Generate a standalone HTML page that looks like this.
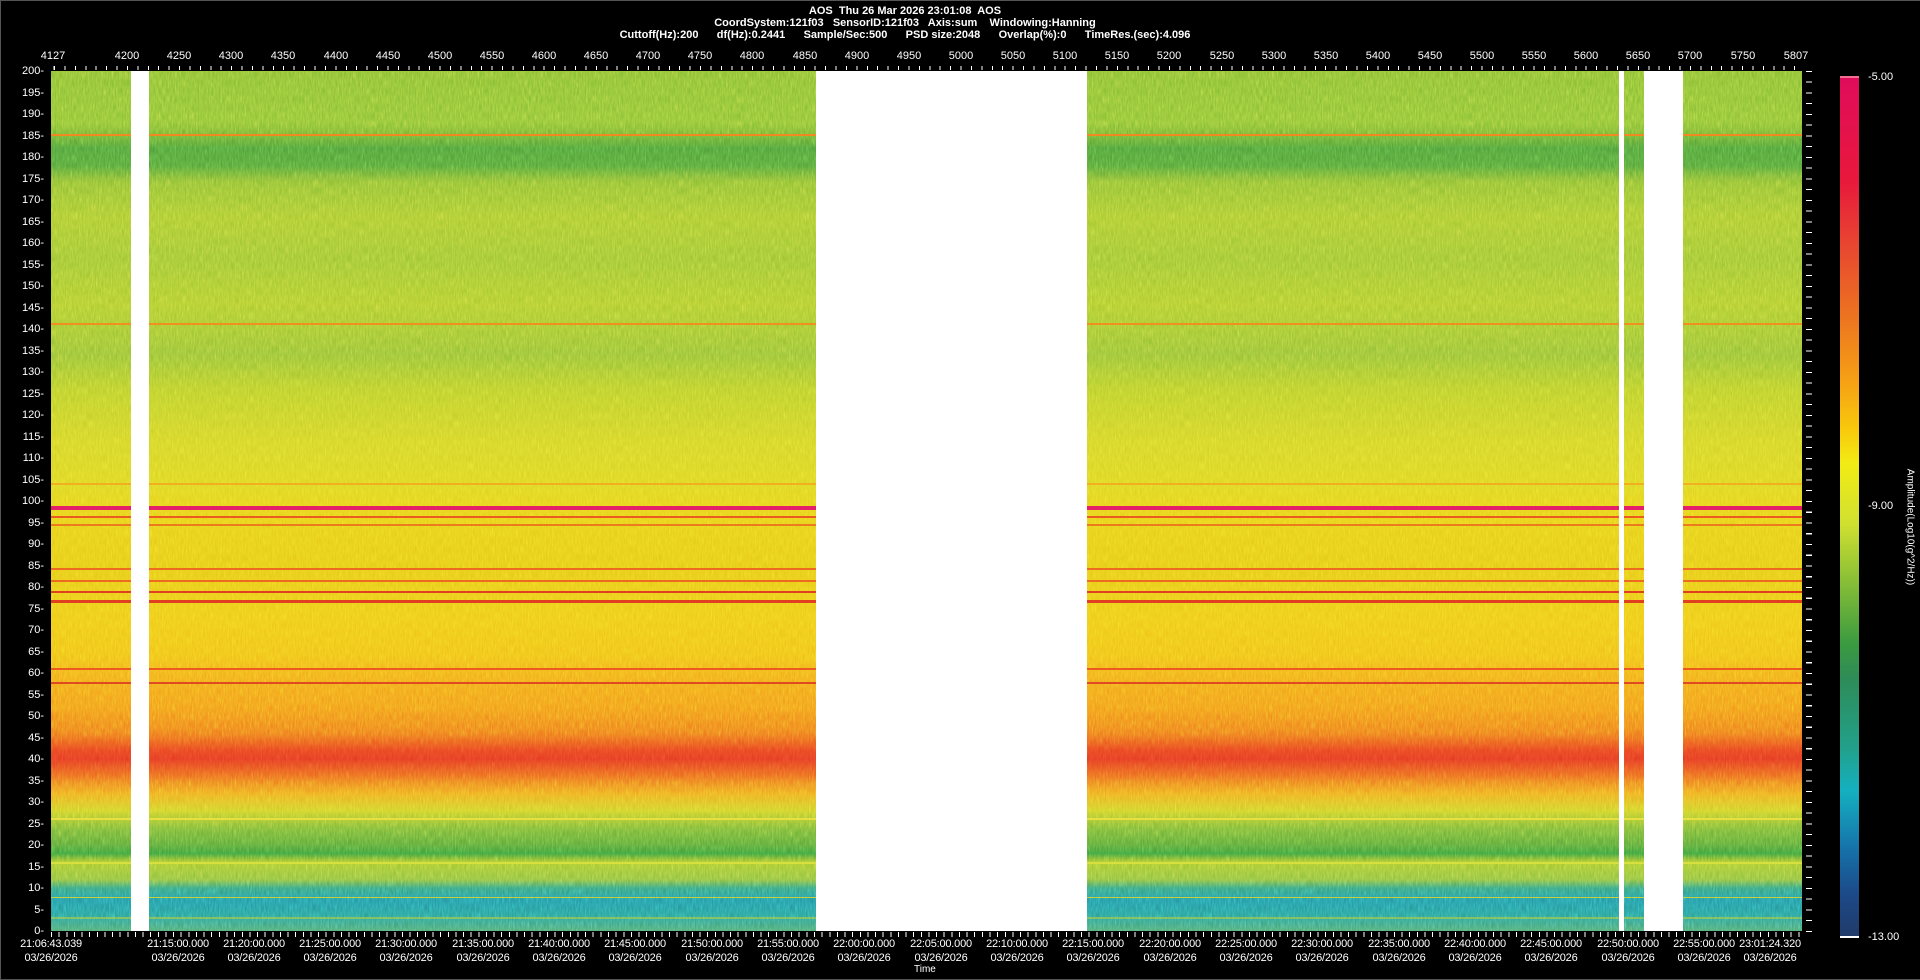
<!DOCTYPE html>
<html><head><meta charset="utf-8"><style>
*{margin:0;padding:0;box-sizing:border-box}
body{width:1920px;height:980px;background:#000;position:relative;overflow:hidden;font-family:"Liberation Sans",sans-serif;color:#fff}
.frame{position:absolute;left:0;top:0;width:1920px;height:980px;border:1px solid #555;border-right:none}
.t{position:absolute;font-size:11px;font-weight:bold;white-space:pre;left:0;width:1810px;text-align:center}
.xl{position:absolute;top:50px;font-size:11px;transform:translateX(-50%)}
.yl{position:absolute;left:0;width:44px;text-align:right;font-size:11px;transform:translateY(-50%)}
.tl{position:absolute;top:937px;font-size:11px;text-align:center;transform:translateX(-50%);line-height:14px;white-space:nowrap;letter-spacing:-0.2px}
#plot{position:absolute;left:51px;top:71px;width:1751px;height:860px;overflow:hidden;
background:linear-gradient(to bottom,
#86bd34 0%,#8cc236 6%,#7ab634 7%,#4f9e3a 9%,#55a23a 11%,#8ebf34 13%,#a8c832 17%,#9cc434 22%,#aecb30 27%,#94c036 33%,#b8cd2c 37%,#d2d228 43%,#dcd424 48%,#e6d01c 51%,#e6c81a 58%,#eec81a 64%,#f0c01a 68%,#f2a61c 71%,#f29a1c 74%,#ee7a1e 77%,#e84420 79%,#e43a22 80%,#ec6a20 82%,#eeaa22 84%,#cfd02a 86%,#7cb838 88%,#5ca63a 90%,#3e9c3c 91%,#a8c830 92%,#8cc040 94%,#3aa27a 95%,#2696a2 96.5%,#2a9c98 98%,#50a870 100%)}
.line{position:absolute;left:0;width:100%}
.gap{position:absolute;top:0;height:100%;background:#fff}
#cbar{position:absolute;left:1840px;top:76px;width:19px;height:861px;background:linear-gradient(to bottom,#e00c5c 0%,#e8183c 12%,#e84830 20%,#ec7420 28%,#f6a414 36%,#f8c80c 41%,#f2ec14 45%,#d0e030 52%,#7ab838 60%,#3a9a40 66%,#2e8c58 70%,#22a08a 78%,#14b0c0 83%,#1670a8 90%,#1c4a88 95%,#203a6a 100%)}
</style></head><body>
<div class="frame"></div>
<div class="t" style="top:5px">AOS  Thu 26 Mar 2026 23:01:08  AOS</div>
<div class="t" style="top:17px">CoordSystem:121f03   SensorID:121f03   Axis:sum    Windowing:Hanning</div>
<div class="t" style="top:29px">Cuttoff(Hz):200      df(Hz):0.2441      Sample/Sec:500      PSD size:2048      Overlap(%):0      TimeRes.(sec):4.096</div>

<div class="xl" style="left:53px">4127</div>
<div class="xl" style="left:127px">4200</div><div class="xl" style="left:179px">4250</div><div class="xl" style="left:231px">4300</div><div class="xl" style="left:283px">4350</div><div class="xl" style="left:336px">4400</div><div class="xl" style="left:388px">4450</div><div class="xl" style="left:440px">4500</div><div class="xl" style="left:492px">4550</div><div class="xl" style="left:544px">4600</div><div class="xl" style="left:596px">4650</div><div class="xl" style="left:648px">4700</div><div class="xl" style="left:700px">4750</div><div class="xl" style="left:752px">4800</div><div class="xl" style="left:805px">4850</div><div class="xl" style="left:857px">4900</div><div class="xl" style="left:909px">4950</div><div class="xl" style="left:961px">5000</div><div class="xl" style="left:1013px">5050</div><div class="xl" style="left:1065px">5100</div><div class="xl" style="left:1117px">5150</div><div class="xl" style="left:1169px">5200</div><div class="xl" style="left:1222px">5250</div><div class="xl" style="left:1274px">5300</div><div class="xl" style="left:1326px">5350</div><div class="xl" style="left:1378px">5400</div><div class="xl" style="left:1430px">5450</div><div class="xl" style="left:1482px">5500</div><div class="xl" style="left:1534px">5550</div><div class="xl" style="left:1586px">5600</div><div class="xl" style="left:1638px">5650</div><div class="xl" style="left:1690px">5700</div><div class="xl" style="left:1743px">5750</div><div class="xl" style="left:1796px">5807</div>
<div style="position:absolute;left:51px;top:66px;width:1751px;height:4px;background:repeating-linear-gradient(to right,#fff 0,#fff 1px,transparent 1px,transparent 10.42px);background-position:3px 0"></div>

<div class="yl" style="top:71px">200-</div><div class="yl" style="top:92.5px">195-</div><div class="yl" style="top:114px">190-</div><div class="yl" style="top:135.5px">185-</div><div class="yl" style="top:157px">180-</div><div class="yl" style="top:178.5px">175-</div><div class="yl" style="top:200px">170-</div><div class="yl" style="top:221.5px">165-</div><div class="yl" style="top:243px">160-</div><div class="yl" style="top:264.5px">155-</div><div class="yl" style="top:286px">150-</div><div class="yl" style="top:307.5px">145-</div><div class="yl" style="top:329px">140-</div><div class="yl" style="top:350.5px">135-</div><div class="yl" style="top:372px">130-</div><div class="yl" style="top:393.5px">125-</div><div class="yl" style="top:415px">120-</div><div class="yl" style="top:436.5px">115-</div><div class="yl" style="top:458px">110-</div><div class="yl" style="top:479.5px">105-</div><div class="yl" style="top:501px">100-</div><div class="yl" style="top:522.5px">95-</div><div class="yl" style="top:544px">90-</div><div class="yl" style="top:565.5px">85-</div><div class="yl" style="top:587px">80-</div><div class="yl" style="top:608.5px">75-</div><div class="yl" style="top:630px">70-</div><div class="yl" style="top:651.5px">65-</div><div class="yl" style="top:673px">60-</div><div class="yl" style="top:694.5px">55-</div><div class="yl" style="top:716px">50-</div><div class="yl" style="top:737.5px">45-</div><div class="yl" style="top:759px">40-</div><div class="yl" style="top:780.5px">35-</div><div class="yl" style="top:802px">30-</div><div class="yl" style="top:823.5px">25-</div><div class="yl" style="top:845px">20-</div><div class="yl" style="top:866.5px">15-</div><div class="yl" style="top:888px">10-</div><div class="yl" style="top:909.5px">5-</div><div class="yl" style="top:931px">0-</div>
<div style="position:absolute;left:1806px;top:71px;width:6px;height:862px;background:repeating-linear-gradient(to bottom,#fff 0,#fff 1px,transparent 1px,transparent 10.75px)"></div>
<div style="position:absolute;left:51px;top:932px;width:1751px;height:5px;background:repeating-linear-gradient(to right,#fff 0,#fff 1px,transparent 1px,transparent 7.63px)"></div>

<div id="plot">
<svg width="1751" height="860" style="position:absolute;left:0;top:0;mix-blend-mode:overlay;opacity:.8">
<filter id="n"><feTurbulence type="fractalNoise" baseFrequency="0.7 0.12" numOctaves="2" seed="3"/><feColorMatrix type="saturate" values="0"/></filter>
<rect width="1751" height="860" filter="url(#n)"/></svg>
<div class="line" style="top:63px;height:2px;background:#f08a20"></div>
<div class="line" style="top:252px;height:2px;background:#f0901e"></div>
<div class="line" style="top:412px;height:2px;background:#f0b020"></div>
<div class="line" style="top:435px;height:4px;background:#e4206a"></div>
<div class="line" style="top:445px;height:2px;background:#ec5a20"></div>
<div class="line" style="top:453px;height:2px;background:#ee7a1e"></div>
<div class="line" style="top:497px;height:2px;background:#ee6a20"></div>
<div class="line" style="top:509px;height:2px;background:#ee6a20"></div>
<div class="line" style="top:520px;height:2px;background:#e04020"></div>
<div class="line" style="top:529px;height:3px;background:#e04020"></div>
<div class="line" style="top:597px;height:2px;background:#ec5a20"></div>
<div class="line" style="top:611px;height:2px;background:#e04a20"></div>
<div class="line" style="top:747px;height:2px;background:#e8e040"></div>
<div class="line" style="top:791px;height:2px;background:#d8e040"></div>
<div class="line" style="top:826px;height:1px;background:#c8d040"></div>
<div class="line" style="top:846px;height:2px;background:#b8d040;opacity:.6"></div>
<div class="gap" style="left:80px;width:18px"></div>
<div class="gap" style="left:765px;width:271px"></div>
<div class="gap" style="left:1568px;width:5px"></div>
<div class="gap" style="left:1593px;width:39px"></div>
</div>

<div class="tl" style="left:51px">21:06:43.039<br>03/26/2026</div>
<div class="tl" style="left:178px">21:15:00.000<br>03/26/2026</div><div class="tl" style="left:254px">21:20:00.000<br>03/26/2026</div><div class="tl" style="left:330px">21:25:00.000<br>03/26/2026</div><div class="tl" style="left:406px">21:30:00.000<br>03/26/2026</div><div class="tl" style="left:483px">21:35:00.000<br>03/26/2026</div><div class="tl" style="left:559px">21:40:00.000<br>03/26/2026</div><div class="tl" style="left:635px">21:45:00.000<br>03/26/2026</div><div class="tl" style="left:712px">21:50:00.000<br>03/26/2026</div><div class="tl" style="left:788px">21:55:00.000<br>03/26/2026</div><div class="tl" style="left:864px">22:00:00.000<br>03/26/2026</div><div class="tl" style="left:941px">22:05:00.000<br>03/26/2026</div><div class="tl" style="left:1017px">22:10:00.000<br>03/26/2026</div><div class="tl" style="left:1093px">22:15:00.000<br>03/26/2026</div><div class="tl" style="left:1170px">22:20:00.000<br>03/26/2026</div><div class="tl" style="left:1246px">22:25:00.000<br>03/26/2026</div><div class="tl" style="left:1322px">22:30:00.000<br>03/26/2026</div><div class="tl" style="left:1399px">22:35:00.000<br>03/26/2026</div><div class="tl" style="left:1475px">22:40:00.000<br>03/26/2026</div><div class="tl" style="left:1551px">22:45:00.000<br>03/26/2026</div><div class="tl" style="left:1628px">22:50:00.000<br>03/26/2026</div><div class="tl" style="left:1704px">22:55:00.000<br>03/26/2026</div><div class="tl" style="left:1770px">23:01:24.320<br>03/26/2026</div>
<div style="position:absolute;left:914px;top:964px;font-size:10px">Time</div>

<div id="cbar"></div>
<div style="position:absolute;left:1840px;top:76px;width:19px;height:2px;background:#f07090"></div>
<div style="position:absolute;left:1840px;top:936px;width:19px;height:2px;background:#fff"></div>
<div style="position:absolute;left:1868px;top:71px;font-size:11px">-5.00</div>
<div style="position:absolute;left:1868px;top:500px;font-size:11px">-9.00</div>
<div style="position:absolute;left:1868px;top:931px;font-size:11px">-13.00</div>
<div style="position:absolute;left:1910px;top:527px;font-size:10px;white-space:nowrap;transform:translate(-50%,-50%) rotate(90deg)">Amplitude(Log10(g^2/Hz))</div>
</body></html>
